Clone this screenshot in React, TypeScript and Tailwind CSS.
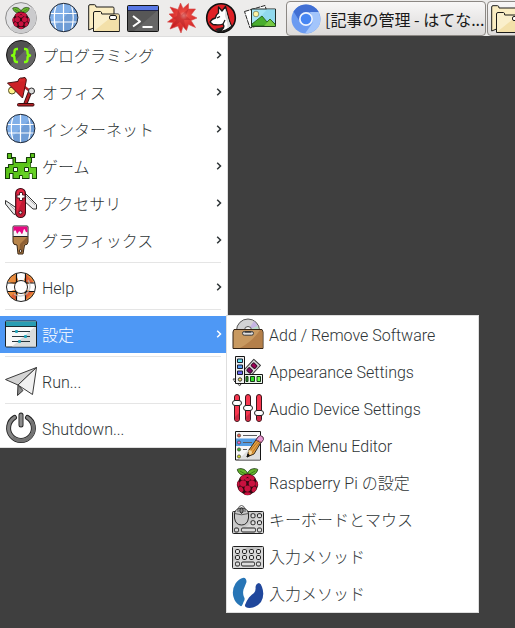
import React from "react";

type IconProps = { children: React.ReactNode; className?: string };

function Icon({ children, className = "" }: IconProps) {
  return (
    <svg viewBox="0 0 32 32" className={"h-8 w-8 shrink-0 " + className} fill="none" stroke="none" strokeLinejoin="round">
      {children}
    </svg>
  );
}

function RaspberryShape() {
  return (
    <g>
      <path d="M15.5 9C11 10 6.500 8 5.500 3C8 1.500 14 1.800 16 7C18 1.800 24 1.500 26.500 3C25.500 8 21 10 16.500 9Z" fill="#68b52f" stroke="#1c3a10" strokeWidth="0.9" />
      <path d="M8 4.500L14 8M24 4.500L18 8" stroke="#2e6b16" strokeWidth="0.8" />
      <path d="M12 8.500Q16 6 20 8.500Q24 10 25 14Q28 17 26.500 21Q25.500 26 21 27.500Q16 32 11 27.500Q6.500 26 5.500 21Q4 17 7 14Q8 10 12 8.500Z" fill="#330810" />
      <g fill="#c9113f">
        <ellipse cx="12" cy="11.500" rx="3.500" ry="2.200" transform="rotate(-28 12 11.500)" />
        <ellipse cx="20" cy="11.500" rx="3.500" ry="2.200" transform="rotate(28 20 11.500)" />
        <ellipse cx="16" cy="9.500" rx="2.500" ry="1.300" />
        <circle cx="11.500" cy="17.500" r="3.300" />
        <circle cx="20.500" cy="17.500" r="3.300" />
        <ellipse cx="16" cy="13.500" rx="2.700" ry="1.700" />
        <ellipse cx="6.700" cy="18" rx="1.300" ry="2.900" />
        <ellipse cx="25.300" cy="18" rx="1.300" ry="2.900" />
        <circle cx="16" cy="22.800" r="3.200" />
        <ellipse cx="9.300" cy="23.500" rx="2.100" ry="3" transform="rotate(-30 9.300 23.500)" />
        <ellipse cx="22.700" cy="23.500" rx="2.100" ry="3" transform="rotate(30 22.700 23.500)" />
        <ellipse cx="16" cy="28" rx="3.200" ry="1.400" />
      </g>
    </g>
  );
}

const MenuButtonIcon = () => (
  <Icon>
    <circle cx="16" cy="16" r="15.400" fill="#e2e2e4" stroke="#8c8c8c" strokeWidth="1" />
    <path d="M5 26.500L27 5A15 15 0 0 1 5 26.500Z" fill="#cbcbcd" />
    <g transform="translate(3.400 3.700) scale(.79)"><RaspberryShape /></g>
  </Icon>
);

const GlobeIcon = () => (
  <Icon>
    <circle cx="15.700" cy="15.500" r="14.200" fill="#80afe8" />
    <path d="M5.500 25.500L26 5.500A14.200 14.200 0 0 1 5.500 25.500Z" fill="#6f9dd6" />
    <path d="M15.500 1.500V29.500M1.500 11.500H30M1.500 20H30M8 3.500Q4.500 15.500 8 27.500M23.500 3.500Q27 15.500 23.500 27.500" stroke="#fff" strokeWidth="1.200" />
    <circle cx="15.700" cy="15.500" r="14.200" stroke="#242b36" strokeWidth="1" />
  </Icon>
);

const FoldersIcon = () => (
  <Icon>
    <path d="M.7 28V4Q.7 2.700 2 2.700H6.500Q8 2.700 8 5H25Q26 5 26 6.500V28H5.500V26Z" fill="#faedc2" stroke="#1b1b19" />
    <path d="M5.500 29.500V11Q5.500 9.500 7 9.500H12.500Q13.700 9.500 13.700 12H30Q31.300 12 31.300 13.500V29.500Z" fill="#faefcb" stroke="#1b1b19" />
    <path d="M6 29L26.500 12.500H30.800V29Z" fill="#f3e0a9" />
    <rect x="21.500" y="13.500" width="7" height="4" rx="1.500" fill="#fff" stroke="#1b1b19" />
  </Icon>
);

const TerminalIcon = () => (
  <Icon>
    <rect x=".5" y="3.500" width="31" height="26" rx="1" fill="#575757" stroke="#151515" />
    <path d="M31 8V29H7Z" fill="#666" />
    <path d="M1 4H31V8.500H1Z" fill="#5777e4" />
    <path d="M1 8.500H31" stroke="#20254a" />
    <path d="M6 14L13 19.500L6 24.500" stroke="#fff" strokeWidth="2" />
    <path d="M15.500 25H25.500" stroke="#fff" strokeWidth="2" />
  </Icon>
);

const StarIcon = () => (
  <Icon>
    <defs>
      <radialGradient id="splat" cx=".55" cy=".42" r=".55">
        <stop offset="0" stopColor="#f8a8a0" /><stop offset=".25" stopColor="#e84a42" /><stop offset="1" stopColor="#d21f20" />
      </radialGradient>
    </defs>
    <path d="M14.500 1L17 6.500L22.500 1.500L22.500 7L29.500 7L25 13L31 16L25 18.500L29.500 25.500L22.500 22.500L20.500 28.500L17 24.500L15 31L12 24L4 27L7 20.500L1.500 20L7 16L3 12L8 11.500L4 5L12 7.500Z" fill="url(#splat)" stroke="#d74c49" strokeWidth=".6" />
    <path d="M12 8L15 13L22.500 7L20 14L25 18L18 18L20 28L14 20L4 27L10 18L7 16L11 14Z" fill="#a5151c" opacity=".35" />
  </Icon>
);

const WolfIcon = () => (
  <Icon>
    <circle cx="16" cy="16" r="14.300" fill="#df2025" stroke="#101010" strokeWidth="1.600" />
    <path d="M27 25Q22 31 13 30L10 27L22 24Z" fill="#242424" />
    <path d="M13.500 5L17 9L20.500 4.500L22.500 12Q24 19 26.500 24Q21 29.500 14 29.500Q21 26 18 22Q14 23.500 8 22.500L5 20Q7 16.500 10.500 16Q11 12.500 13.500 11Z" fill="#fff" stroke="#181818" strokeWidth="1.300" />
    <path d="M12 16L15 14.500M18 22L20 18" stroke="#181818" strokeWidth="1.200" />
    <path d="M20.500 6L22 12Q24 20 26 24L22.500 26Q23 20 20 14Z" fill="#d9d9d9" />
  </Icon>
);

const PicturesIcon = () => (
  <Icon>
    <path d="M.5 9.500L21 3.500L26 20L6 26Z" fill="#fff" stroke="#292929" strokeDasharray="5 .7" />
    <rect x="7.500" y="7" width="24" height="17.500" fill="#a5e5f5" stroke="#202b26" />
    <path d="M8 24L23 7.500H31V24Z" fill="#91d9ee" />
    <circle cx="12" cy="12" r="2.800" fill="#fff4a2" stroke="#657456" strokeWidth=".7" />
    <path d="M8 24V22L18 14L23 20L26 17L31 22V24Z" fill="#49ae2e" stroke="#256018" strokeWidth=".9" />
    <path d="M20 24L26 17.500L31 23V24Z" fill="#76c943" />
  </Icon>
);

const ChromiumIcon = () => (
  <Icon>
    <circle cx="16" cy="16" r="14.500" fill="#6b9bf1" />
    <path d="M3.500 8.500Q8 1.500 16 1.500Q24.500 1.500 28.600 9H16Q10 10 9.500 18Z" fill="#416fd3" />
    <path d="M28.600 9Q34 22 23 28.700Q19.500 30.500 15 30.500L22.500 20Q24 15 20 9Z" fill="#a3c5fb" />
    <circle cx="16" cy="16" r="7" fill="#edf3fe" />
    <circle cx="16" cy="16" r="5.300" fill="#4786f3" />
  </Icon>
);

const CodeIcon = () => (
  <Icon>
    <circle cx="16" cy="16" r="14.500" fill="#515151" stroke="#161616" />
    <path d="M5.500 26L26 5.500A14.300 14.300 0 0 1 5.500 26Z" fill="#666" />
    <path d="M13 10H12Q9.500 10 9.500 12.500V14Q9.500 16 7 16.500Q9.500 17 9.500 19V20.500Q9.500 23 12 23H13M19 10H20Q22.500 10 22.500 12.500V14Q22.500 16 25 16.500Q22.500 17 22.500 19V20.500Q22.500 23 20 23H19" stroke="#83ff0d" strokeWidth="2.400" />
  </Icon>
);

const LampIcon = () => (
  <Icon>
    <circle cx="7" cy="14.500" r="3.500" fill="#fff48b" stroke="#565021" />
    <path d="M25 16L20.500 27.500" stroke="#300b0d" strokeWidth="4.200" />
    <path d="M25 16L20.500 27.500M17 9L25 15" stroke="#b42026" strokeWidth="2.400" />
    <path d="M2.500 7L13 5.500Q13.500 1.500 17 2L20 1.500Q22 3 21 6L17.500 22Z" fill="#d82629" stroke="#380d0e" />
    <path d="M2.500 7L21 5L17.500 22Z" fill="#b91d22" opacity=".35" />
    <circle cx="26.500" cy="15" r="3" fill="#ddd" stroke="#292929" />
    <rect x="12.500" y="27.500" width="16.500" height="2.500" rx="1" fill="#b52025" stroke="#390c0e" />
  </Icon>
);

const InvaderIcon = () => (
  <Icon>
    <path d="M2.500 3.500H6.500V7.500H10.500V12.500H21.500V7.500H25.500V3.500H29.500V7.500H26.500V12.500H25.500V17.500H31.500V28.500H27.500V23.500H24V28.500H17.500V25.500H14.500V28.500H8V23.500H4.500V28.500H.5V17.500H3.500V14.500H8V8.500H2.500Z" fill="#5cc51a" stroke="#153c08" strokeWidth="1.100" />
    <path d="M25.500 12.500V17.500H31V28H27.500V23.500H24V28H17.500V25H14L11 28Z" fill="#6cd62b" opacity=".7" />
    <rect x="8.500" y="17.500" width="4" height="4" fill="#fff" stroke="#153c08" />
    <rect x="19.500" y="17.500" width="4" height="4" fill="#fff" stroke="#153c08" />
  </Icon>
);

const KnifeIcon = () => (
  <Icon>
    <path d="M.5 13.500V17L9 27.500L13 26V22Z" fill="#e7e9e9" stroke="#323232" />
    <path d="M18 4L31.500 17.500V22H28L18 13Z" fill="#ececed" stroke="#323232" />
    <path d="M5 18L12 25M21 9L30 18" stroke="#aaa" />
    <rect x="10.700" y="1.500" width="9.700" height="29" rx="4.800" fill="#e52643" stroke="#3d0b14" strokeWidth="1.200" />
    <path d="M19.700 8V26Q18 30 15.500 30Q13 30 11.500 27Z" fill="#c31b35" />
    <path d="M14.500 5.500H17.500V8H20V11H17.500V13.500H14.500V11H12V8H14.500Z" fill="#fff" stroke="#541923" strokeWidth="1" />
    <circle cx="15.500" cy="25.500" r="1.600" fill="#ddd" stroke="#3d0b14" />
  </Icon>
);

const BrushIcon = () => (
  <Icon>
    <path d="M8 12H23V18Q23 21 19.500 21L18 30H13L12 21Q8 21 8 18Z" fill="#b8854b" stroke="#382513" />
    <path d="M22 13V18Q22 20 18.700 20L17.500 29H14L15 20Z" fill="#8e6034" />
    <rect x="8" y="2" width="15" height="10.500" rx="1" fill="#f7f7f7" stroke="#202020" />
    <path d="M8.500 2.500H22.500V8Q21 9 20 6Q19 3.500 18 8Q17 12 15.500 8Q14 6 13 9Q12 11 11 7Q10 5 8.500 8Z" fill="#e60882" />
    <circle cx="15.500" cy="27" r="1.300" fill="#fff" stroke="#3a2411" />
  </Icon>
);

const HelpIcon = () => (
  <Icon>
    <circle cx="16" cy="16" r="11" stroke="#fff" strokeWidth="8" />
    <circle cx="16" cy="16" r="10.700" stroke="#e88b3c" strokeWidth="7.600" pathLength="80" strokeDasharray="10 10" strokeDashoffset="-45" />
    <path d="M20.500 3L28.500 11.500H21.500L20.500 10ZM28.500 20.500L20.500 28.500V22L22 20.500ZM5.500 26L9 22L11.500 24V29Z" fill="#e06036" />
    <path d="M11.500 2.500V11L10.500 12H2.500M20.500 2.500V11L21.500 12H29.500M2.500 20.500H10.500L11.500 21.500V29.500M29.500 20.500H21.500L20.500 21.500V29.500" stroke="#111" strokeWidth="1.200" />
    <path d="M23 9A10 10 0 0 1 9 23" stroke="#bfbfbf" strokeWidth="1.600" opacity=".7" />
    <circle cx="16" cy="16" r="6.500" fill="#fff" stroke="#202020" />
    <circle cx="16" cy="16" r="14.500" stroke="#202020" />
  </Icon>
);

const SettingsIcon = () => (
  <Icon>
    <rect x=".5" y="3" width="31" height="26" rx="1" fill="#f7f8f8" stroke="#192226" />
    <path d="M31 8V28.500H7Z" fill="#d9dcdc" />
    <path d="M1 3.500H31V8.500H1Z" fill="#289db2" />
    <path d="M1 8.500H31" stroke="#182b30" />
    <path d="M7 13.500H25M7 18.500H25M7 23.500H25" stroke="#27343a" />
    <path d="M11.500 12V15M20.500 17V20M14.500 22V25" stroke="#22abc0" strokeWidth="2.500" />
  </Icon>
);

const RunIcon = () => (
  <Icon>
    <path d="M13 20L12.500 30.500L18 25.500Z" fill="#8d8d8d" stroke="#333" />
    <path d="M31.500 2.500L.5 14.500L13 20Z" fill="#d4d4d4" stroke="#3a3a3a" />
    <path d="M31.500 2.500L13 20L27.500 29.500Z" fill="#f1f1f1" stroke="#3a3a3a" />
  </Icon>
);

const PowerIcon = () => (
  <Icon>
    <path d="M9.500 5.500A12.400 12.400 0 1 0 22.500 5.500" stroke="#222" strokeWidth="5" strokeLinecap="round" />
    <path d="M9.500 5.500A12.400 12.400 0 1 0 22.500 5.500" stroke="#858585" strokeWidth="3.200" strokeLinecap="round" />
    <path d="M27 10A12.400 12.400 0 0 1 9 26.300" stroke="#737373" strokeWidth="3.200" strokeLinecap="round" />
    <path d="M16 3V13" stroke="#222" strokeWidth="5" strokeLinecap="round" />
    <path d="M16 3V13" stroke="#8c8c8c" strokeWidth="3.200" strokeLinecap="round" />
  </Icon>
);

const SoftwareIcon = () => (
  <Icon>
    <circle cx="16" cy="12.500" r="11.500" fill="#d3d3d4" stroke="#555" />
    <path d="M16 12L22 3L26 8Z" fill="#c5b5e4" />
    <path d="M16 12L25.500 8L27 12Z" fill="#b7dbc9" />
    <circle cx="16" cy="12" r="3.500" fill="#f3f3f3" stroke="#555" />
    <path d="M2 11.500H30L31 14V30.500H1V14Z" fill="#c89960" stroke="#332315" />
    <path d="M30.500 14V30H8Q20 24 28 12H29.500Z" fill="#b47f49" />
    <rect x="10.500" y="13.500" width="11" height="3.700" rx="1.800" fill="#ddd" stroke="#373737" />
    <path d="M12.500 14.500H19.500" stroke="#606060" />
  </Icon>
);

const AppearanceIcon = () => (
  <Icon>
    <path d="M1 24H11L8 31L2 26Z" fill="#ddd" stroke="#333" strokeDasharray="2 1" />
    <g transform="rotate(43 19 14)">
      <rect x="14.500" y="5" width="9" height="18" fill="#dadada" stroke="#363636" />
      <rect x="16.500" y="7.500" width="5" height="4" rx="1" fill="#a00056" stroke="#33132a" />
      <rect x="16.500" y="14" width="5" height="4" rx="1" fill="#820061" stroke="#33132a" />
    </g>
    <rect x="11.500" y="19.500" width="19" height="9" fill="#edf8ed" stroke="#151515" />
    <rect x="3.500" y="1.500" width="9" height="27" fill="#f1f1f1" stroke="#151515" />
    {["#60e1f1", "#5799f0", "#6865ef"].map((color, i) => (
      <rect key={color} x="5.500" y={4 + i * 6} width="5" height="3.500" fill={color} stroke="#172032" />
    ))}
    <path d="M14 21.500H16V26.500H14Z" fill="#2e9926" stroke="#173a18" />
    <rect x="18.500" y="21.500" width="4" height="5" fill="#35de2b" stroke="#173a18" />
    <rect x="25" y="21.500" width="3.500" height="5" fill="#69ff44" stroke="#173a18" />
    <circle cx="8" cy="24.500" r="1.700" fill="#f1e167" stroke="#333" />
  </Icon>
);

const AudioIcon = () => (
  <Icon>
    {[5, 16, 27].map((x, i) => {
      const y = [11, 16, 21][i];
      return (
        <g key={x}>
          <rect x={x - 2.500} y="2.500" width="5" height="27" rx="2.500" fill="#f7374f" stroke="#38161c" />
          <path d={`M${x - 2} 25L${x + 2} 21V27Q${x + 1.500} 29 ${x} 29Q${x - 1.500} 29 ${x - 2} 27Z`} fill="#cc2943" />
          <rect x={x - 4.500} y={y - 2.500} width="9" height="5" rx="2.500" fill="#fff" stroke="#232323" />
        </g>
      );
    })}
  </Icon>
);

const EditorIcon = () => (
  <Icon>
    <rect x="3.500" y="2.500" width="25" height="28.500" fill="#f7f7f7" stroke="#151515" />
    <path d="M28 8V30.500H7Z" fill="#dedede" />
    <path d="M4 9.500H28V17H4Z" fill="#529de5" />
    {["#ed5849", "#f369cf", "#38b727", "#cbd621"].map((color, i) => (
      <circle key={color} cx="7" cy={6.500 + i * 7} r="1.600" fill={color} stroke="#4b493e" strokeWidth=".8" />
    ))}
    <path d="M11 6.500H25M11 13.500H20M11 20.500H15" stroke="#5c5c60" />
    <path d="M15 28L17 21L26 8Q29 6 31 10L22 25Z" fill="#e6a242" stroke="#3d311f" />
    <path d="M24 11L26 8Q28 5 31 8Q33 10 29 14Z" fill="#e897d1" stroke="#59344e" />
    <path d="M15 28L16 25L17.500 26.500Z" fill="#111" stroke="#111" />
    <path d="M18 22L27 11M20 24L28.500 12" stroke="#a76421" strokeWidth=".8" />
    <path d="M16 22L17 21Q20 21 20 24L18 26Z" fill="#f2d49a" />
  </Icon>
);

const RaspberryIcon = () => <Icon><g transform="translate(0 .5) scale(.97)"><RaspberryShape /></g></Icon>;

const KeyboardMouseIcon = () => (
  <Icon>
    <rect x=".5" y="8.500" width="31" height="22" rx="1" fill="#cacaca" stroke="#202020" />
    <path d="M31 9V30H7Z" fill="#d9d9d9" />
    {[19, 25.500].flatMap((x) => [10.700, 17.700].map((y) => (
      <rect key={`${x}-${y}`} x={x} y={y} width="4" height="4" rx="1.300" fill="#dedede" stroke="#222" />
    )))}
    <rect x="2.500" y="25" width="4" height="4" rx="1.300" fill="#ddd" stroke="#222" />
    <rect x="9.500" y="25" width="14" height="4" rx="1.300" fill="#ddd" stroke="#222" />
    <rect x="25.500" y="25" width="4" height="4" rx="1.300" fill="#ddd" stroke="#222" />
    <path d="M2.500 10Q4 5 9.500 5Q15 5 16.500 10V15Q15.500 22 9.500 22Q3.500 22 2.500 15Z" fill="#c9c9c9" stroke="#292929" />
    <path d="M2.500 10.500Q9.500 13 16.500 10.500M9.500 5V11" stroke="#555" />
    <path d="M6 9V6Q7 2.500 9.500 2.500Q12 2.500 13 6V9" stroke="#555" />
    <ellipse cx="9.500" cy="7.500" rx="1.700" ry="2.500" fill="#888" stroke="#222" />
  </Icon>
);

const KeyboardIcon = () => (
  <Icon>
    <rect x=".5" y="6.500" width="31" height="22" rx="1" fill="#d8d8d8" stroke="#202020" />
    <path d="M.9 28V16L31 7H15L1 22Z" fill="#bebebe" />
    {[3.500, 10.500, 17.500, 24.500].flatMap((x) => [9.500, 15.500].map((y) => (
      <rect key={`${x}-${y}`} x={x} y={y} width="4" height="4" rx="1.300" fill="#e6e6e6" stroke="#202020" />
    )))}
    <rect x="3.500" y="22" width="4" height="4" rx="1.300" fill="#ddd" stroke="#202020" />
    <rect x="9.500" y="22" width="13" height="4" rx="1.300" fill="#ddd" stroke="#202020" />
    <rect x="24.500" y="22" width="4" height="4" rx="1.300" fill="#ddd" stroke="#202020" />
  </Icon>
);

const InputMethodIcon = () => (
  <Icon>
    <path d="M11.500 .8Q14.500 1 14.500 5Q13 9 11.500 12.500Q10.500 17 12 20Q13.500 22 11.500 25Q10 30 8.500 29Q3 26 1.500 20Q-.5 13 3.500 6.500Q6.500 2 11.500 .8Z" fill="#2775b6" />
    <path d="M27 6Q29 6.500 30 10Q33 18 29 25Q25 30.500 17.500 31Q12.500 31 13 28Q15 23 17 20.500Q20 17 22 16Q24 14 23.500 10Q24 6.500 27 6Z" fill="#20479c" />
  </Icon>
);

const Chevron = () => (
  <svg viewBox="0 0 6 8" className="mr-[5px] h-2 w-1.5 shrink-0 -translate-y-px" fill="none">
    <path d="M1.200 .7L4.500 4L1.200 7.300" stroke="currentColor" strokeWidth="1.500" />
  </svg>
);

function MenuRow({ icon, label, arrow = false, active = false }: { icon: React.ReactNode; label: string; arrow?: boolean; active?: boolean }) {
  return (
    <div className={"flex h-[37px] items-center gap-[5px] pl-[5px] " + (active ? "bg-[#4e98f5] text-white" : "text-[#2e3436]")}>
      <span className="-mt-px">{icon}</span>
      <span className="flex-1 translate-y-px whitespace-nowrap">{label}</span>
      {arrow && <Chevron />}
    </div>
  );
}

const Separator = () => <div className="mr-1.5 ml-[5px] flex h-2.5 items-start pt-[3px]"><div className="h-px w-full bg-[#e5e5e5]" /></div>;

export default function App() {
  return (
    <div className="relative h-[628px] w-[515px] overflow-hidden bg-[#3f3f3f] font-['Roboto','Noto_Sans_CJK_JP',sans-serif] text-[16px] leading-6 font-light">
      <header className="flex h-9 items-start overflow-hidden bg-[#edeceb] pt-0.5 pl-[5px]">
        <MenuButtonIcon />
        <div className="ml-[11px]"><GlobeIcon /></div>
        <div className="ml-2 flex gap-[7px]">
          <FoldersIcon />
          <TerminalIcon />
          <StarIcon />
          <WolfIcon />
          <PicturesIcon />
        </div>
        <div className="-mt-px ml-[10px] flex h-[35px] w-[200px] shrink-0 items-center rounded-[4px] border border-[#8c8884] bg-linear-to-b from-[#f8f7f7] to-[#dcdad9] pl-[3px] font-['Noto_Sans_CJK_JP',sans-serif] font-normal text-[#191919]">
          <ChromiumIcon />
          <span className="ml-[3px] whitespace-nowrap">[記事の管理 - はてな...</span>
        </div>
        <div className="-mt-px ml-px flex h-[35px] w-[200px] shrink-0 items-center rounded-[4px] border border-[#8c8884] bg-linear-to-b from-[#f8f7f7] to-[#dcdad9] pl-[3px]">
          <FoldersIcon />
        </div>
      </header>

      <nav className="h-[412px] w-[228px] border-t border-r border-b border-[#dedede] bg-white">
        <MenuRow icon={<CodeIcon />} label="プログラミング" arrow />
        <MenuRow icon={<LampIcon />} label="オフィス" arrow />
        <MenuRow icon={<GlobeIcon />} label="インターネット" arrow />
        <MenuRow icon={<InvaderIcon />} label="ゲーム" arrow />
        <MenuRow icon={<KnifeIcon />} label="アクセサリ" arrow />
        <MenuRow icon={<BrushIcon />} label="グラフィックス" arrow />
        <Separator />
        <MenuRow icon={<HelpIcon />} label="Help" arrow />
        <Separator />
        <MenuRow icon={<SettingsIcon />} label="設定" arrow active />
        <Separator />
        <MenuRow icon={<RunIcon />} label="Run..." />
        <Separator />
        <MenuRow icon={<PowerIcon />} label="Shutdown..." />
      </nav>

      <nav className="absolute top-[315px] left-[226px] h-[298px] w-[253px] border border-[#dedede] bg-white">
        <MenuRow icon={<SoftwareIcon />} label="Add / Remove Software" />
        <MenuRow icon={<AppearanceIcon />} label="Appearance Settings" />
        <MenuRow icon={<AudioIcon />} label="Audio Device Settings" />
        <MenuRow icon={<EditorIcon />} label="Main Menu Editor" />
        <MenuRow icon={<RaspberryIcon />} label="Raspberry Pi の設定" />
        <MenuRow icon={<KeyboardMouseIcon />} label="キーボードとマウス" />
        <MenuRow icon={<KeyboardIcon />} label="入力メソッド" />
        <MenuRow icon={<InputMethodIcon />} label="入力メソッド" />
      </nav>
    </div>
  );
}
